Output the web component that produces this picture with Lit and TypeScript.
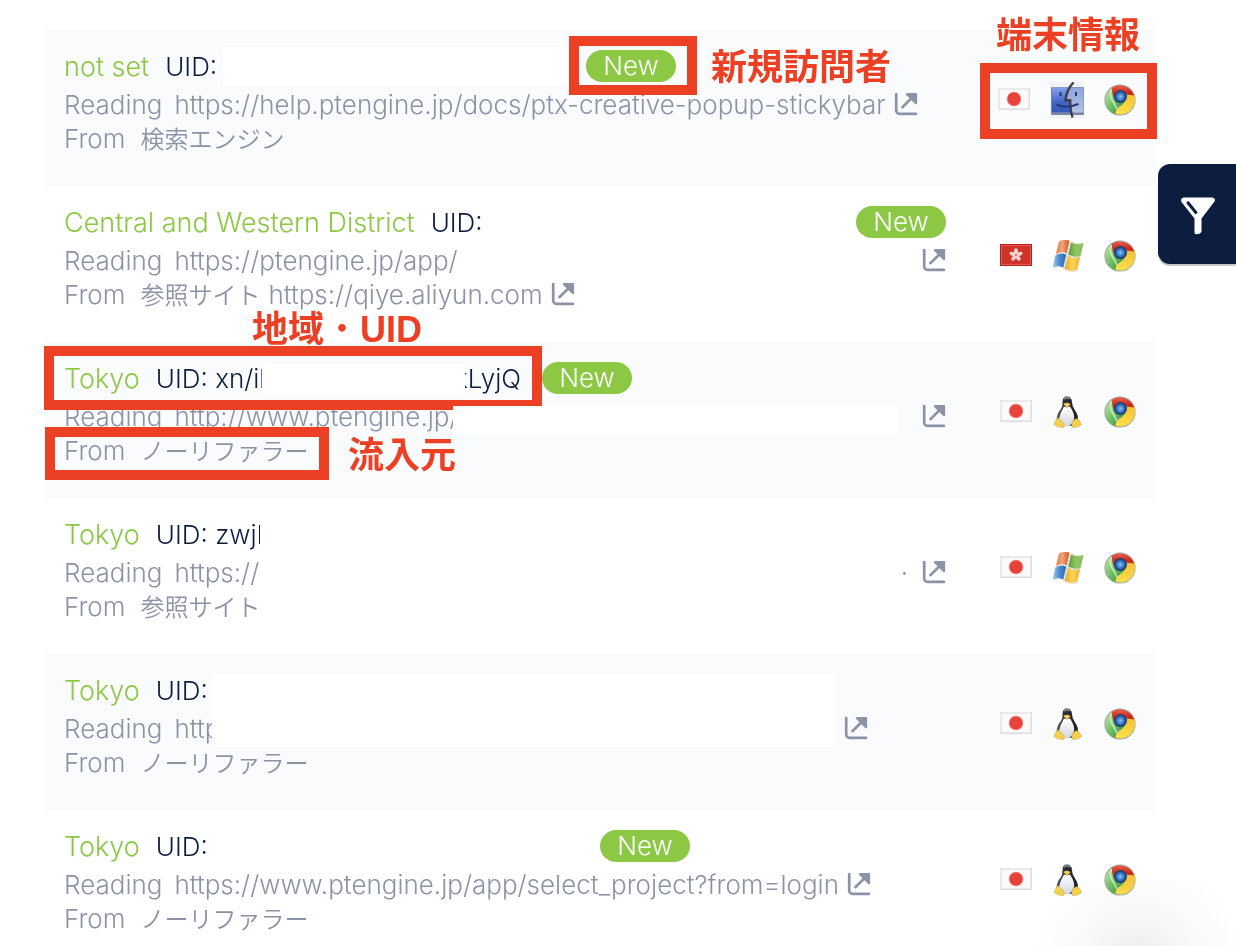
import { LitElement, html, css, svg, nothing } from "lit";
import { customElement } from "lit/decorators.js";
import { styleMap } from "lit/directives/style-map.js";

type Os = "mac" | "windows" | "linux";
type Flag = "jp" | "hk";

interface Mask {
  left: number;
  top: number;
  width: number;
  height: number;
}

interface Visit {
  place: string;
  uid: string;
  uidTail?: string;
  headWidth?: number;
  isNew: boolean;
  url: string;
  urlWidth?: number;
  urlTail?: string;
  source: string;
  sourceUrl?: string;
  flag: Flag;
  os: Os;
  masks: Mask[];
}

const VISITS: Visit[] = [
  {
    place: "not set", uid: "", headWidth: 522, isNew: true,
    url: "https://help.ptengine.jp/docs/ptx-creative-popup-stickybar",
    source: "検索エンジン", flag: "jp", os: "mac",
    masks: [{ left: 179, top: 17, width: 346, height: 39 }],
  },
  {
    place: "Central and Western District", uid: "", headWidth: 792, isNew: true,
    url: "https://ptengine.jp/app/", urlWidth: 850,
    source: "参照サイト", sourceUrl: "https://qiye.aliyun.com", flag: "hk", os: "windows",
    masks: [],
  },
  {
    place: "Tokyo", uid: "xn/il", uidTail: "kLyjQ", headWidth: 478, isNew: true,
    url: "http://www.ptengine.jp/", urlWidth: 850,
    source: "ノーリファラー", flag: "jp", os: "linux",
    masks: [
      { left: 218, top: 21, width: 203, height: 31 },
      { left: 409, top: 64, width: 445, height: 30 },
    ],
  },
  {
    place: "Tokyo", uid: "zwjK", isNew: false,
    url: "https://", urlWidth: 850, urlTail: "·",
    source: "参照サイト", flag: "jp", os: "windows",
    masks: [{ left: 216, top: 16, width: 560, height: 76 }],
  },
  {
    place: "Tokyo", uid: "", isNew: false,
    url: "http", urlWidth: 772,
    source: "ノーリファラー", flag: "jp", os: "linux",
    masks: [{ left: 168, top: 20, width: 623, height: 73 }],
  },
  {
    place: "Tokyo", uid: "", headWidth: 536, isNew: true,
    url: "https://www.ptengine.jp/app/select_project?from=login",
    source: "ノーリファラー", flag: "jp", os: "linux",
    masks: [],
  },
];

const openIcon = html`<svg width="24" height="24" viewBox="0 0 24 24" aria-hidden="true">
  <path d="M2.2 2.2V18.6a3.2 3.2 0 0 0 3.2 3.2H22" fill="none" stroke="currentColor" stroke-width="2.7" stroke-linecap="round"/>
  <path d="M12.6 1H22.500q.6 0 .6.6V11.800l-1.300.6L11.700 2.400z" fill="currentColor"/>
  <path d="M8.400 15.200 18 5.800" stroke="currentColor" stroke-width="2.6" stroke-linecap="round"/>
</svg>`;

const chrome = html`<svg width="32" height="32" viewBox="0 0 32 32" role="img" aria-label="Chrome">
  <defs>
    <linearGradient id="cr" x1="0" y1="0" x2="0" y2="1"><stop offset="0" stop-color="#e8604e"/><stop offset=".5" stop-color="#cf2a20"/><stop offset="1" stop-color="#b81d14"/></linearGradient>
    <linearGradient id="cy" x1="0" y1="0" x2="0" y2="1"><stop offset="0" stop-color="#f0c033"/><stop offset="1" stop-color="#fce04e"/></linearGradient>
    <linearGradient id="cg" x1="0" y1="0" x2="1" y2="1"><stop offset="0" stop-color="#c4e4ad"/><stop offset=".5" stop-color="#6dbd62"/><stop offset="1" stop-color="#2c8a3e"/></linearGradient>
    <radialGradient id="cb"><stop offset="0" stop-color="#8dc3f5"/><stop offset=".6" stop-color="#4183d3"/><stop offset="1" stop-color="#2a5ea8"/></radialGradient>
  </defs>
  <circle cx="16" cy="16" r="15.6" fill="#77806f" opacity=".7"/>
  <path d="M16 16 6.500 5A14.600 14.600 0 0 0 13 30.300L20 19z" fill="url(#cg)"/>
  <path d="M29.400 9A14.800 14.800 0 0 1 11.500 29.800Q11.500 24.500 16.500 22Q22 19 22 12z" fill="url(#cy)"/>
  <path d="M8 3.900A14.700 14.700 0 0 1 30 11.500L20 10Q11 9 10.500 15Q7.500 9 8 3.900z" fill="url(#cr)"/>
  <path d="M7.500 5Q5 11 8 16t5 9" fill="none" stroke="#dff1d4" stroke-width="1.600" opacity=".8"/>
  <circle cx="16.400" cy="12.600" r="6.600" fill="#24446f"/>
  <circle cx="16.400" cy="12.600" r="4.800" fill="url(#cb)"/>
</svg>`;

const windows = html`<svg width="32" height="32" viewBox="0 0 32 32" role="img" aria-label="Windows">
  <defs>
    <linearGradient id="wr" x2="1"><stop offset="0" stop-color="#dc7430"/><stop offset=".45" stop-color="#f0a878"/><stop offset="1" stop-color="#d4502a"/></linearGradient>
    <linearGradient id="wg" x2="1"><stop offset="0" stop-color="#5c9d3a"/><stop offset=".5" stop-color="#8fc55c"/><stop offset="1" stop-color="#8dbd60"/></linearGradient>
    <linearGradient id="wb" x2="1"><stop offset="0" stop-color="#a9cdee"/><stop offset=".5" stop-color="#4a8bd0"/><stop offset="1" stop-color="#2e67ad"/></linearGradient>
    <linearGradient id="wy" x2="1"><stop offset="0" stop-color="#e8a92a"/><stop offset=".5" stop-color="#fbd552"/><stop offset="1" stop-color="#efb62e"/></linearGradient>
  </defs>
  <path d="M1.500 29.500 3.500 15Q9 12 14.500 14.500L18 1.500 31.500 4 28.500 17 25.500 31Q18 33 12 29.500L10.500 28Q6 26 1.500 29.500z" fill="#c9c9c9" opacity=".55"/>
  <path d="M7 1.500Q12-1.500 17.500 .800L14.800 13.500Q9 10.800 4 14z" fill="url(#wr)"/>
  <path d="M19 2.500Q25 6 31.500 2.800L28.600 15.800Q22.500 18 16.400 14.500z" fill="url(#wg)"/>
  <path d="M3.500 15.200Q9 12 14.200 14.800L11.200 27.500Q6 24.500.500 27.500z" fill="url(#wb)"/>
  <path d="M16 15.800Q22 19.500 28 17L25 29.800Q18.500 32.500 12.800 28.800z" fill="url(#wy)"/>
</svg>`;

const linux = html`<svg width="32" height="32" viewBox="0 0 32 32" role="img" aria-label="Linux">
  <defs>
    <linearGradient id="lb" x1="0" x2="0" y2="1"><stop offset="0" stop-color="#fff"/><stop offset="1" stop-color="#d2d6de"/></linearGradient>
    <linearGradient id="lk" x2="1"><stop offset="0" stop-color="#55595e"/><stop offset=".4" stop-color="#2a2d31"/><stop offset="1" stop-color="#1f2226"/></linearGradient>
  </defs>
  <path d="M10.500 6Q10.500.500 15 .500T20 6Q20 10 22.500 13.500Q27 20 26 26Q23 30 15 30T4.500 25Q4.500 18 9 13Q10.800 10.500 10.500 6z" fill="url(#lk)"/>
  <path d="M12 3Q15 .800 18 3" fill="none" stroke="#85898e" stroke-width="1.600"/>
  <path d="M12 10.500Q15 12 18 10.500Q22.300 17 22.300 22Q20 30.500 14.500 30.500T7 23Q8 17 12 10.500z" fill="url(#lb)"/>
  <path d="M11.500 8Q15 5.500 18.500 8.300L15 12z" fill="#f3c95a"/>
  <path d="M5.500 22Q2.500 25.500 2 28.500Q6 32 11.500 31.500Q13.500 29.500 11.500 27Q8 22.500 5.500 22z" fill="#f6d24c" stroke="#b79a3d" stroke-width=".4"/>
  <path d="M25 22.500Q20.500 24 20 27Q19.300 30 20.500 31.500Q26 32 29.500 28.500Q28 24 25 22.500z" fill="#f6d24c" stroke="#b79a3d" stroke-width=".4"/>
</svg>`;

const mac = html`<svg width="34" height="36" viewBox="0 0 34 36" role="img" aria-label="Mac">
  <defs>
    <linearGradient id="ml" x1="0" y1="0" x2="0" y2="1"><stop offset="0" stop-color="#86a0ec"/><stop offset=".6" stop-color="#4363c6"/><stop offset="1" stop-color="#3556bd"/></linearGradient>
    <linearGradient id="mr" x1="0" y1="0" x2="0" y2="1"><stop offset="0" stop-color="#8fa3e0"/><stop offset="1" stop-color="#b3bfe2"/></linearGradient>
  </defs>
  <rect width="34" height="36" fill="#f1f2f5"/>
  <rect x="1" y="5" width="33" height="28" rx="1" fill="#7c86a3"/>
  <rect x="2" y="5.500" width="31.500" height="25" fill="url(#mr)"/>
  <path d="M2 5.500H20Q16.500 11 15.500 18H20Q20 25 21 30.500H2z" fill="url(#ml)"/>
  <path d="M23.500.500Q17 7 15.400 18.300H20.200Q19.800 27 22.500 35.500" fill="none" stroke="#3a3f4a" stroke-width="2.400"/>
  <path d="M10.500 10V14M26 10V14" stroke="#26386f" stroke-width="2"/>
  <path d="M6.500 22.500Q15.500 27 28.500 22" fill="none" stroke="#26386f" stroke-width="2"/>
</svg>`;

const flags = {
  jp: html`<svg width="32" height="32" viewBox="0 0 32 32" role="img" aria-label="Japan">
    <rect y="4" width="32" height="22" fill="#dedede"/>
    <rect y="4" width="31" height="21" fill="#eaeaea"/>
    <rect x="2" y="6" width="28" height="18" fill="#fafafa"/>
    <circle cx="16" cy="15" r="7" fill="#e8433b" stroke="#f4a5a0" stroke-width=".6"/>
  </svg>`,
  hk: html`<svg width="32" height="32" viewBox="0 0 32 32" role="img" aria-label="Hong Kong">
    <rect y="4" width="32" height="22" fill="#b8211b"/>
    <rect x="1.500" y="5.500" width="29" height="19" fill="#d0332a" stroke="#dc5c54" stroke-width="1"/>
    <g fill="#f3d0cd">
      ${[0, 72, 144, 216, 288].map((a) => svg`<ellipse cx="16" cy="11.400" rx="2" ry="3.200" transform="rotate(${a} 16 15)"/>`)}
    </g>
    <circle cx="16" cy="15" r="1" fill="#dd6f68"/>
  </svg>`,
};

const systems = { mac, windows, linux };

@customElement("visit-row")
export class VisitRow extends LitElement {
  static properties = { visit: { attribute: false } };
  declare visit: Visit;

  static styles = css`
    :host {
      display: flex;
      position: relative;
      justify-content: space-between;
      padding: 20px 20px 30px;
      color: #8c93a6;
      white-space: nowrap;
    }
    .line {
      display: flex;
      align-items: center;
      height: 34px;
    }
    .head {
      margin-bottom: 4px;
      color: #0c1d3f;
    }
    .who {
      display: flex;
      gap: 16px;
    }
    .place {
      color: #8cc843;
      font-size: 27px;
    }
    .tail {
      margin-left: auto;
      padding-right: 21px;
    }
    .badge {
      width: 90px;
      height: 32px;
      margin-bottom: 2px;
      border-radius: 16px;
      background: #8cc843;
      color: #fff;
      line-height: 31px;
      text-align: center;
    }
    .reading {
      margin-right: 12px;
    }
    .from {
      margin-right: 15px;
    }
    .url {
      display: flex;
      justify-content: space-between;
    }
    .tail-dot {
      padding-right: 6px;
    }
    .source {
      font: 350 24px/32px "Noto Sans CJK JP", sans-serif;
      padding-bottom: 2px;
    }
    .source-url {
      margin-left: 8px;
    }
    a {
      display: flex;
      margin: 0 0 2px 8px;
      color: inherit;
    }
    .devices {
      display: flex;
      align-items: center;
      gap: 20px;
      height: 32px;
      padding-top: 34px;
    }
    .mask {
      position: absolute;
      background: #fff;
    }
  `;

  render() {
    const v = this.visit;
    const px = (n?: number) => (n ? `${n}px` : "auto");
    return html`
      <div>
        <div class="line head">
          <span class="who" style=${styleMap({ width: px(v.headWidth) })}>
            <span class="place">${v.place}</span>
            <span>UID: ${v.uid}</span>
            ${v.uidTail ? html`<span class="tail">${v.uidTail}</span>` : nothing}
          </span>
          ${v.isNew ? html`<span class="badge">New</span>` : nothing}
        </div>
        <div class="line">
          <span class="url" style=${styleMap({ width: px(v.urlWidth) })}>
            <span><span class="reading">Reading</span>${v.url}</span>
            ${v.urlTail ? html`<span class="tail-dot">${v.urlTail}</span>` : nothing}
          </span>
          <a href="#" aria-label="Open page">${openIcon}</a>
        </div>
        <div class="line">
          <span class="from">From</span><span class="source">${v.source}</span>
          ${v.sourceUrl
            ? html`<span class="source-url">${v.sourceUrl}</span><a href="#" aria-label="Open source">${openIcon}</a>`
            : nothing}
        </div>
      </div>
      <div class="devices">${flags[v.flag]}${systems[v.os]}${chrome}</div>
      ${v.masks.map(
        (m) => html`<span class="mask" style=${styleMap({
          left: px(m.left), top: px(m.top), width: px(m.width), height: px(m.height),
        })}></span>`
      )}
    `;
  }
}

@customElement("app-root")
export class AppRoot extends LitElement {
  static styles = css`
    :host {
      display: block;
      position: relative;
      box-sizing: border-box;
      height: 100vh;
      overflow: hidden;
      padding: 30px 80px 0 44px;
      background: #fff;
      font: 300 26px/34px Inter, "Noto Sans CJK JP", sans-serif;
    }
    visit-row:nth-child(odd) {
      background: #fafbfd;
    }
    .filter {
      position: absolute;
      top: 164px;
      right: 0;
      display: flex;
      align-items: center;
      justify-content: center;
      width: 78px;
      height: 100px;
      padding: 4px 0 0 2px;
      border: 0;
      border-radius: 12px 0 0 12px;
      background: #0c1d3f;
      box-shadow: 0 2px 1px #c3c5c9;
    }
    .glow {
      position: absolute;
      right: 0;
      bottom: 0;
      width: 216px;
      height: 66px;
      background: radial-gradient(circle 108px at 118px 84px, #eaeaea, #f4f4f4 30%, #fafafa 60%, #fff);
      mix-blend-mode: multiply;
    }
    .frame {
      position: absolute;
      box-sizing: border-box;
      border: 10px solid #eb4023;
    }
    .note {
      position: absolute;
      color: #eb4023;
      font: 700 36px/40px "Liberation Sans", "Noto Sans CJK JP", sans-serif;
      white-space: nowrap;
    }
    .dot { font-weight: 400; }
    .frame-new { left: 569px; top: 36px; width: 128px; height: 59px; }
    .frame-device { right: 79px; top: 63px; width: 177px; height: 76px; }
    .frame-uid { left: 44px; top: 346px; width: 498px; height: 64px; }
    .frame-from { left: 45px; top: 427px; width: 284px; height: 53px; }
    .frame-cover { position: absolute; left: 453px; top: 406px; width: 89px; height: 4px; background: #fff; }
    .note-new { left: 711px; top: 48px; }
    .note-device { right: 96px; top: 16px; }
    .note-uid { left: 252px; top: 310px; }
    .note-from { left: 348px; top: 436px; }
  `;

  render() {
    return html`
      <main>${VISITS.map((v) => html`<visit-row .visit=${v}></visit-row>`)}</main>
      <div class="glow"></div>
      <span class="frame frame-new"></span>
      <span class="note note-new">新規訪問者</span>
      <span class="frame frame-device"></span>
      <span class="note note-device">端末情報</span>
      <span class="frame frame-uid"></span>
      <span class="frame-cover"></span>
      <span class="note note-uid">地域<span class="dot">・</span>UID</span>
      <span class="frame frame-from"></span>
      <span class="note note-from">流入元</span>
      <button class="filter" aria-label="Filter">
        <svg width="36" height="40" viewBox="0 0 36 40" aria-hidden="true">
          <path d="M4 1.500H32Q36 2 34.500 5.500L21.500 22.500V35.500Q21 38 16 38.300Q14.500 38.300 14.500 36.500V22.500L1.500 6Q0 2 4 1.500z" fill="#fff"/>
          <path d="M8 6.800 15.800 16.500" stroke="#0c1d3f" stroke-width="3" stroke-linecap="round"/>
        </svg>
      </button>
    `;
  }
}
